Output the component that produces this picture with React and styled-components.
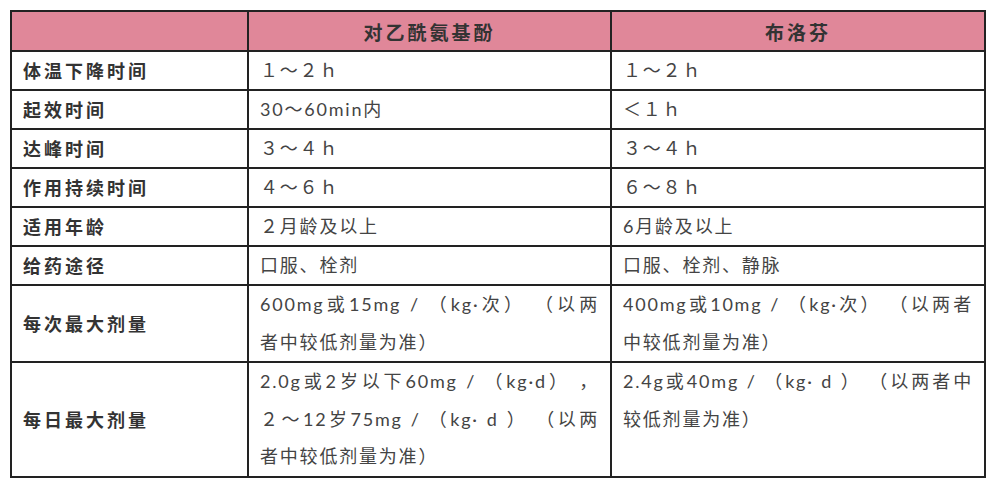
import React from 'react'
import styled, { createGlobalStyle } from 'styled-components'

const GlobalStyle = createGlobalStyle`
  html, body {
    margin: 0;
    padding: 0;
    background: #ffffff;
  }
  body {
    font-family: Lato, "Noto Sans CJK SC", "Noto Sans", sans-serif;
    color: #333;
  }
`

const rows = [
  { label: '体温下降时间', a: ['１～２ｈ'], b: ['１～２ｈ'] },
  { label: '起效时间', a: ['30～60min内'], b: ['＜１ｈ'] },
  { label: '达峰时间', a: ['３～４ｈ'], b: ['３～４ｈ'] },
  { label: '作用持续时间', a: ['４～６ｈ'], b: ['６～８ｈ'] },
  { label: '适用年龄', a: ['２月龄及以上'], b: ['6月龄及以上'] },
  { label: '给药途径', a: ['口服、栓剂'], b: ['口服、栓剂、静脉'] },
  {
    label: '每次最大剂量',
    a: ['600mg或15mg / （kg·次） （以两', '者中较低剂量为准）'],
    b: ['400mg或10mg / （kg·次） （以两者', '中较低剂量为准）'],
  },
  {
    label: '每日最大剂量',
    a: ['2.0g或2岁以下60mg / （kg·d） ，', '２～12岁75mg / （kg· d ） （以两', '者中较低剂量为准）'],
    b: ['2.4g或40mg / （kg· d ） （以两者中', '较低剂量为准）'],
  },
]

function Lines({ lines, tall }) {
  return lines.map((line, i) => (
    <Line key={i} $spread={i < lines.length - 1} $tall={tall}>{line}</Line>
  ))
}

function App() {
  return (
    <>
      <GlobalStyle />
      <Page>
        <Table>
          <colgroup>
            <col style={{ width: 237 }} />
            <col style={{ width: 363 }} />
            <col />
          </colgroup>
          <thead>
            <tr>
              <HeadCell />
              <HeadCell>对乙酰氨基酚</HeadCell>
              <HeadCell>布洛芬</HeadCell>
            </tr>
          </thead>
          <tbody>
            {rows.map((row) => {
              const tall = Math.max(row.a.length, row.b.length) > 1
              return (
                <tr key={row.label}>
                  <LabelCell>{row.label}</LabelCell>
                  <DataCell>
                    <Lines lines={row.a} tall={tall} />
                  </DataCell>
                  <DataCell>
                    <Lines lines={row.b} tall={tall} />
                  </DataCell>
                </tr>
              )
            })}
          </tbody>
        </Table>
      </Page>
    </>
  )
}

const Page = styled.div`
  padding: 10px;
`

const Table = styled.table`
  width: 976px;
  border-collapse: collapse;
  table-layout: fixed;
  border: 2px solid #222;
`

const HeadCell = styled.th`
  background: #e08799;
  border: 2px solid #222;
  height: 38px;
  padding: 0;
  font-family: "Noto Sans CJK SC", sans-serif;
  font-size: 19px;
  font-weight: 700;
  letter-spacing: 3px;
  color: #333;
  text-align: center;
`

const LabelCell = styled.td`
  border: 2px solid #222;
  padding: 0 11px;
  font-family: "Noto Sans CJK SC", sans-serif;
  font-size: 18px;
  font-weight: 700;
  letter-spacing: 3px;
  line-height: 37px;
  color: #333;
  vertical-align: middle;
`

const DataCell = styled.td`
  border: 2px solid #222;
  padding: 0 11px;
  font-size: 18px;
  letter-spacing: 1.8px;
  color: #444;
  vertical-align: top;
`

const Line = styled.div`
  white-space: nowrap;
  line-height: ${(p) => (p.$tall ? '37.5px' : '37px')};
  text-align: ${(p) => (p.$spread ? 'justify' : 'left')};
  text-align-last: ${(p) => (p.$spread ? 'justify' : 'auto')};
  text-justify: inter-word;
`

export default App
